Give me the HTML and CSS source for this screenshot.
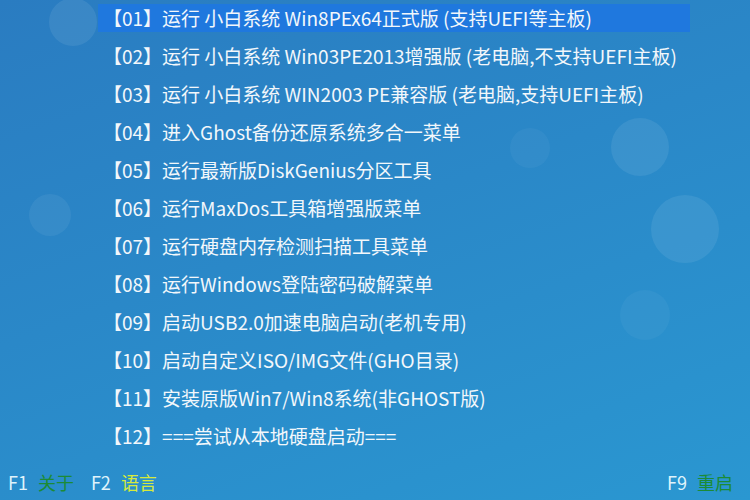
FILE: index.html
```html
<!DOCTYPE html>
<html lang="zh-CN">
<head>
<meta charset="utf-8">
<link rel="stylesheet" href="styles.css">
</head>
<body>
<div class="screen">
  <div class="bubble b1"></div>
  <div class="bubble b2"></div>
  <div class="bubble b3"></div>
  <div class="bubble b4"></div>
  <div class="bubble b5"></div>
  <div class="bubble b6"></div>
  <ul class="menu">
    <li class="item active">【01】运行 小白系统 Win8PEx64正式版 (支持UEFI等主板)</li>
    <li class="item">【02】运行 小白系统 Win03PE2013增强版 (老电脑,不支持UEFI主板)</li>
    <li class="item">【03】运行 小白系统 WIN2003 PE兼容版 (老电脑,支持UEFI主板)</li>
    <li class="item">【04】进入Ghost备份还原系统多合一菜单</li>
    <li class="item">【05】运行最新版DiskGenius分区工具</li>
    <li class="item">【06】运行MaxDos工具箱增强版菜单</li>
    <li class="item">【07】运行硬盘内存检测扫描工具菜单</li>
    <li class="item">【08】运行Windows登陆密码破解菜单</li>
    <li class="item">【09】启动USB2.0加速电脑启动(老机专用)</li>
    <li class="item">【10】启动自定义ISO/IMG文件(GHO目录)</li>
    <li class="item">【11】安装原版Win7/Win8系统(非GHOST版)</li>
    <li class="item">【12】===尝试从本地硬盘启动===</li>
  </ul>
  <div class="footer">
    <div class="keys">
      <span class="key">F1</span><span class="label green">关于</span>
      <span class="key">F2</span><span class="label yellow">语言</span>
    </div>
    <div class="keys">
      <span class="key">F9</span><span class="label green">重启</span>
    </div>
  </div>
</div>
</body>
</html>
```
FILE: styles.css
```css
html, body {
  margin: 0;
  padding: 0;
}
.screen {
  position: relative;
  width: 750px;
  height: 500px;
  overflow: hidden;
  display: flex;
  flex-direction: column;
  background: linear-gradient(160deg, #2a7cc1 0%, #2a88c8 45%, #2a97d1 100%);
  font-family: "Noto Sans CJK SC", "Noto Sans", sans-serif;
  color: #f2f7fb;
}
.bubble {
  position: absolute;
  border-radius: 50%;
  background: rgba(255, 255, 255, 0.08);
}
.b1 { left: 49px; top: -2px; width: 48px; height: 48px; }
.b2 { left: 611px; top: 118px; width: 58px; height: 58px; }
.b3 { left: 651px; top: 195px; width: 68px; height: 68px; }
.b4 { left: 29px; top: 194px; width: 42px; height: 42px; background: rgba(255,255,255,0.06); }
.b5 { left: 510px; top: 128px; width: 40px; height: 40px; background: rgba(255,255,255,0.04); }
.b6 { left: 620px; top: 290px; width: 50px; height: 50px; background: rgba(255,255,255,0.04); }
.menu {
  position: relative;
  list-style: none;
  margin: 0;
  padding: 4px 0 0 98px;
  display: flex;
  flex-direction: column;
  gap: 10px;
}
.item {
  width: 587px;
  height: 28px;
  line-height: 28px;
  padding-left: 5px;
  font-size: 19px;
  white-space: nowrap;
}
.item.active {
  background: #1f78de;
}
.footer {
  position: relative;
  margin-top: auto;
  display: flex;
  justify-content: space-between;
  padding: 0 17px 6px 8px;
  font-size: 18px;
  line-height: 24px;
}
.keys {
  display: flex;
  align-items: center;
}
.key {
  color: #dff3fb;
  margin-right: 10px;
}
.label {
  margin-right: 17px;
}
.keys:last-child .label { margin-right: 0; }
.green { color: #1c8b36; }
.yellow { color: #d6ea3c; }
```
